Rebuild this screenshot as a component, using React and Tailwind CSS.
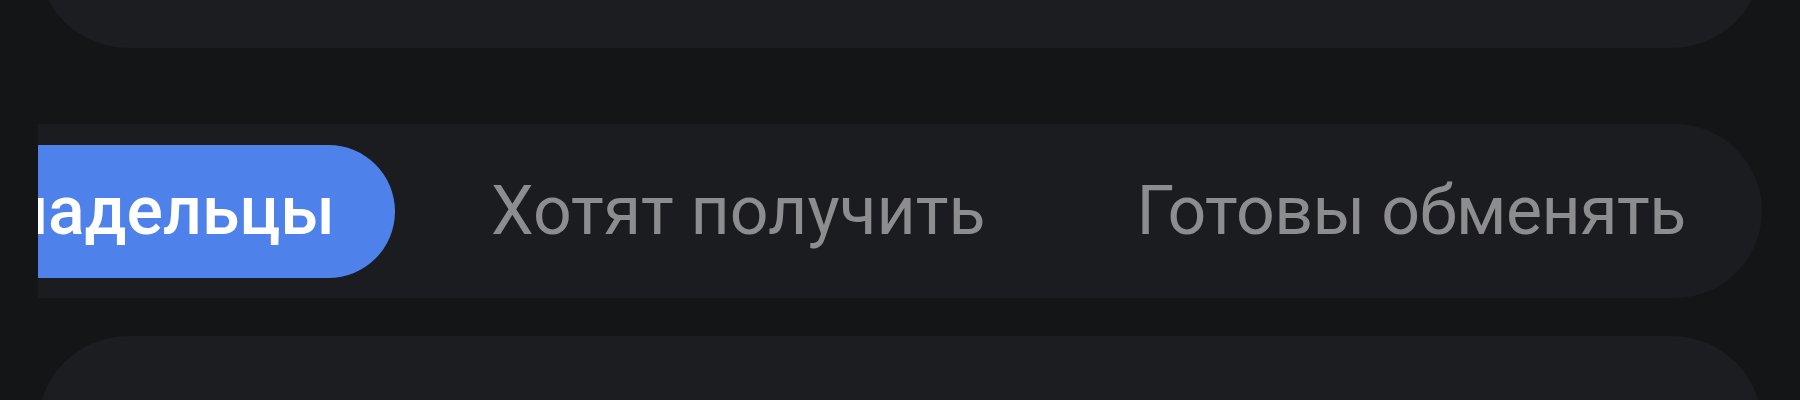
export default function App() {
  return (
    <div
      className="h-[400px] w-full overflow-hidden bg-[#141517] px-[38px]"
      style={{ fontFamily: 'Roboto, "Noto Sans", sans-serif' }}
    >
      <div className="-mt-[152px] h-[200px] rounded-b-[90px] bg-[#1c1d21]" />
      <div className="mt-[76px] flex h-[174px] items-center overflow-hidden rounded-r-[87px] bg-[#1b1c20]">
        <div className="flex h-[133px] w-[357px] shrink-0 items-center justify-end rounded-r-full bg-[#4e81e9] pr-[60px]">
          <span className="whitespace-nowrap text-[68px] font-medium leading-none text-white">
            Владельцы
          </span>
        </div>
        <div className="ml-[36px] flex h-[133px] shrink-0 items-center px-[60px]">
          <span className="whitespace-nowrap text-[68px] leading-none text-[#8d8d90]">
            Хотят получить
          </span>
        </div>
        <div className="ml-[31px] flex h-[133px] shrink-0 items-center px-[60px]">
          <span className="whitespace-nowrap text-[68px] leading-none tracking-[-0.5px] text-[#8d8d90]">
            Готовы обменять
          </span>
        </div>
      </div>
      <div className="mt-[38px] h-[200px] rounded-t-[90px] bg-[#1c1d21]" />
    </div>
  );
}
